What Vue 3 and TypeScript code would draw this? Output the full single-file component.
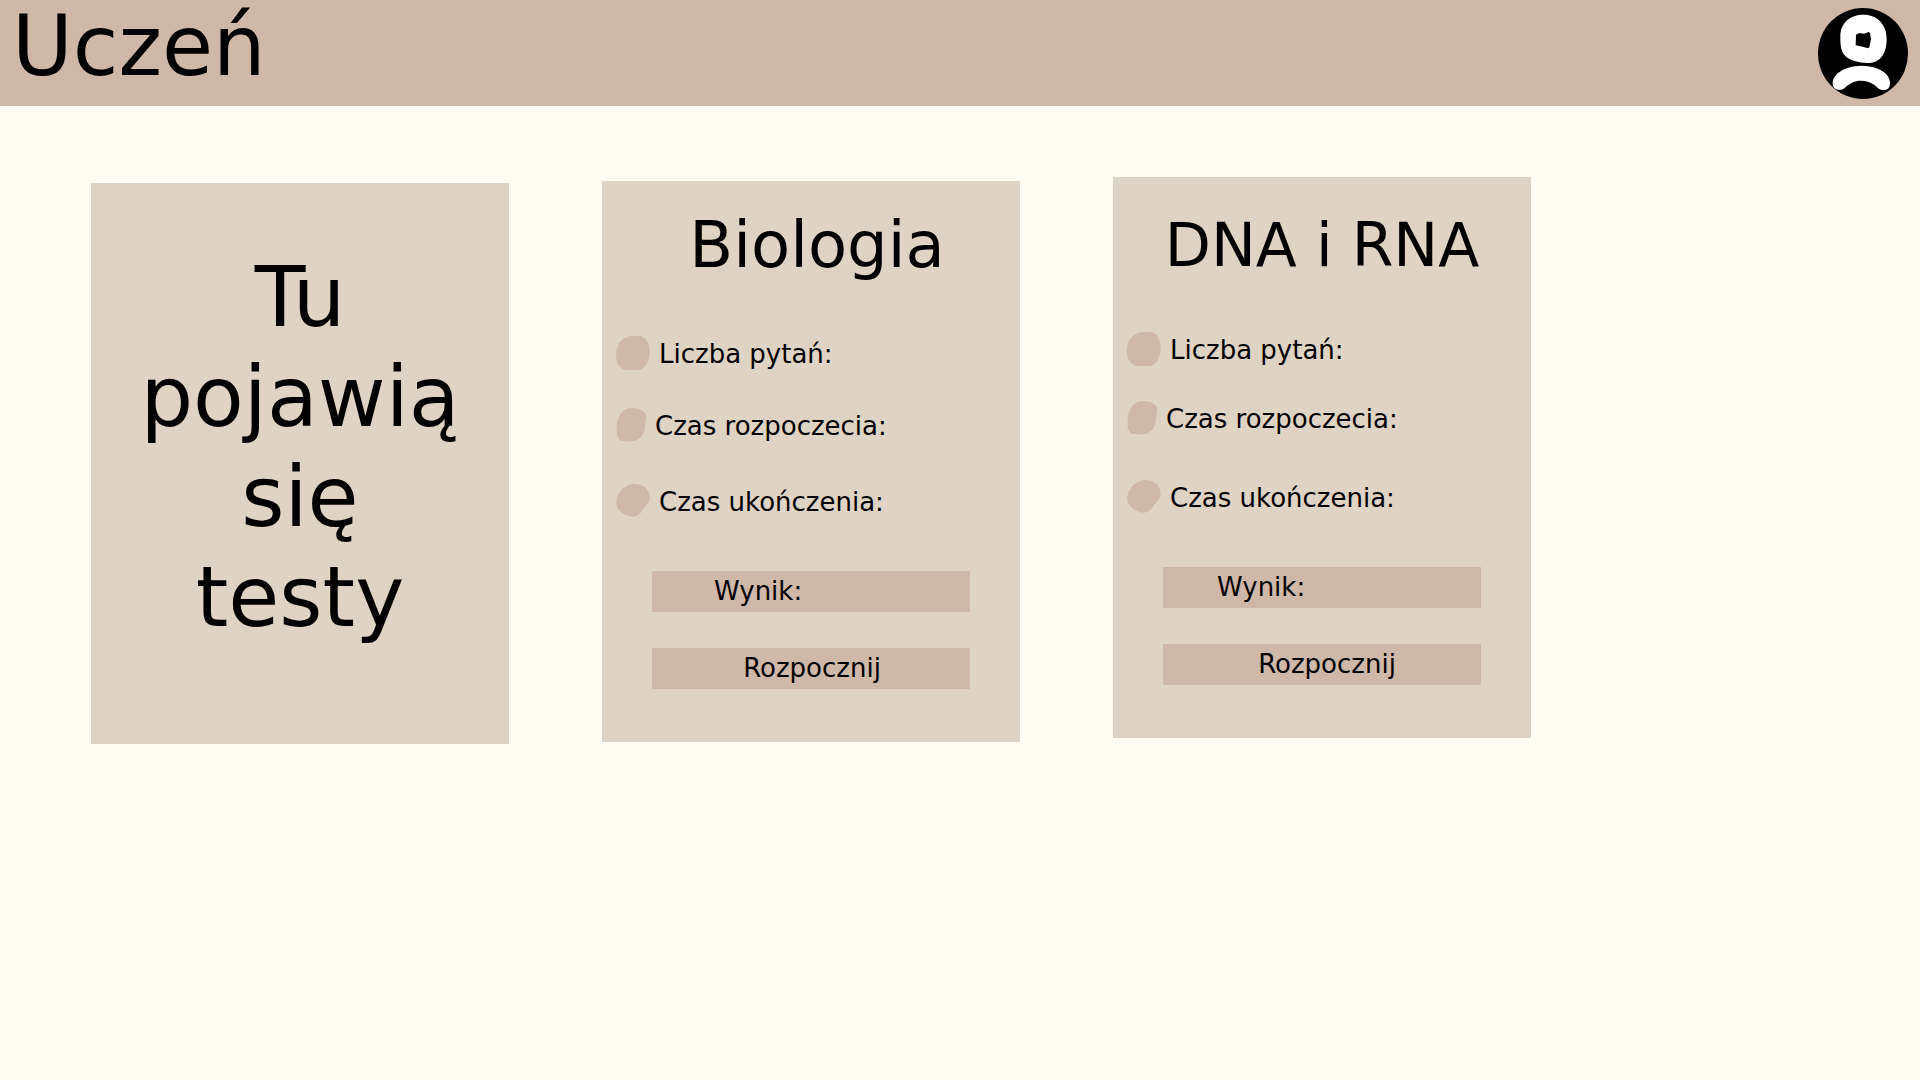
<script setup lang="ts">
interface Blob {
  width: number
  path: string
}

interface TestCard {
  id: string
  title: string
}

const labels: string[] = ['Liczba pytań:', 'Czas rozpoczecia:', 'Czas ukończenia:']

const blobs: Blob[] = [
  { width: 34, path: 'M42 0H74C92 6 101 24 101 48C101 80 84 102 66 102H32C12 100 0 84 0 56C0 24 18 6 42 0Z' },
  { width: 30, path: 'M46 0C64 0 80 4 90 18C92 30 88 40 87 54C86 78 72 98 48 100C34 101 22 101 12 97C2 90 1 76 2 58C2 24 20 0 46 0Z' },
  { width: 34, path: 'M54 0C84 0 102 18 101 42C99 60 86 66 78 80C70 92 62 98 50 98C32 98 1 82 1 56C1 28 26 0 54 0Z' },
]

const tests: TestCard[] = [
  { id: 'biologia', title: 'Biologia' },
  { id: 'dna', title: 'DNA i RNA' },
]
</script>

<template>
  <div class="page">
    <header class="topbar">
      <h1 class="heading">Uczeń</h1>
      <button class="avatar" type="button" aria-label="Profil">
        <svg viewBox="54 24 270 273" width="90" height="91" aria-hidden="true">
          <ellipse cx="189" cy="160.500" rx="135" ry="136.500" fill="#000" />
          <path
            fill="#fff"
            fill-rule="evenodd"
            d="M192 44C230 44 260 72 260 116C260 162 240 189 202 189C176 188 150 182 136 168C122 154 121 134 121 110C121 68 150 44 192 44ZM168 104L178 99L192 101L206 96L210 99L213 118L208 142L204 145L188 140L167 136Z"
          />
          <path
            fill="#fff"
            d="M98 250C98 224 130 198 184 197C238 198 270 222 270 248C270 264 262 270 250 270C236 270 232 260 222 254C210 246 198 242 182 242C164 242 150 250 138 260C130 268 122 271 112 269C102 266 98 260 98 250Z"
          />
        </svg>
      </button>
    </header>

    <main class="cards">
      <section class="card intro">
        <p class="intro-text">Tu<br />pojawią<br />się<br />testy</p>
      </section>

      <section v-for="test in tests" :key="test.id" class="card" :class="test.id">
        <h2 class="title">{{ test.title }}</h2>
        <ul class="details">
          <li v-for="(label, i) in labels" :key="label" class="detail">
            <svg :width="blobs[i].width" height="34" :viewBox="`0 0 ${blobs[i].width * 3} 102`" aria-hidden="true">
              <path :d="blobs[i].path" fill="#d0b8a8" />
            </svg>
            <span>{{ label }}</span>
          </li>
        </ul>
        <div class="actions">
          <div class="bar result">Wynik:</div>
          <button class="bar start" type="button">Rozpocznij</button>
        </div>
      </section>
    </main>
  </div>
</template>

<style>
body {
  margin: 0;
  background: #fffcf3;
}
</style>

<style scoped>
.page {
  min-height: 100vh;
  background: #fffcf3;
  color: #000;
  font-family: "DejaVu Sans", sans-serif;
  font-size: 26px;
}

.topbar {
  display: flex;
  justify-content: space-between;
  align-items: flex-start;
  box-sizing: border-box;
  min-height: 106px;
  padding: 0 12px;
  background: #d0b8a8;
}

.heading {
  margin: 0;
  font-size: 83px;
  font-weight: 400;
  line-height: 94px;
}

.avatar {
  display: block;
  margin: 8px 0 0;
  padding: 0;
  border: 0;
  border-radius: 50%;
  background: none;
  cursor: pointer;
}

.avatar svg {
  display: block;
}

.cards {
  display: flex;
  align-items: flex-start;
  gap: 93px;
  padding: 71px 91px;
}

.card {
  flex: 0 1 418px;
  box-sizing: border-box;
  padding: 30px 0 53px;
  background: #dfd3c3;
}

.intro {
  margin-top: 6px;
  padding: 65px 0 96px;
}

.intro-text {
  margin: 0;
  font-size: 83px;
  line-height: 100px;
  text-align: center;
}

.title {
  margin: 0 0 49px;
  font-size: 60px;
  font-weight: 400;
  line-height: 76px;
  text-align: center;
}

.details {
  display: grid;
  grid-template-rows: 69px 79px 34px;
  align-items: start;
  margin: 0 0 53px;
  padding: 0 0 0 14px;
  list-style: none;
}

.detail {
  display: flex;
  align-items: center;
  gap: 9px;
  height: 34px;
  line-height: 34px;
  white-space: nowrap;
}

.detail svg {
  flex: none;
}

.detail span {
  padding-top: 2px;
}

.actions {
  display: flex;
  flex-direction: column;
  gap: 36px;
  padding: 0 50px;
}

.bar {
  box-sizing: border-box;
  width: 100%;
  padding: 0;
  border: 0;
  border-radius: 0;
  background: #d0b8a8;
  color: inherit;
  font: inherit;
  line-height: 41px;
}

.result {
  padding-left: 54px;
}

.start {
  padding-left: 10px;
  text-align: center;
  cursor: pointer;
}

.biologia {
  margin-top: 4px;
  padding-top: 26px;
}

.biologia .title {
  margin-bottom: 53px;
  padding-left: 12px;
  font-size: 64px;
}

.biologia .details {
  grid-template-rows: 72px 76px 34px;
}

.biologia .result {
  padding-left: 62px;
}

.biologia .start {
  padding-left: 2px;
}
</style>
